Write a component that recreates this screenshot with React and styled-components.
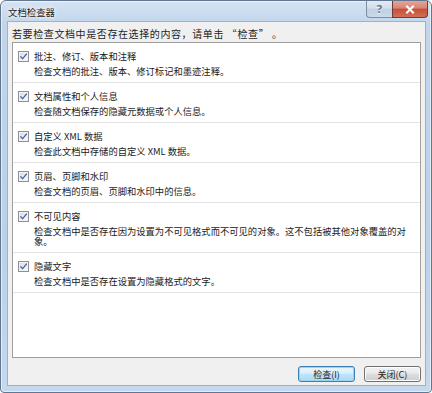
import React from 'react';
import styled, { createGlobalStyle } from 'styled-components';

const GlobalStyle = createGlobalStyle`
  html, body {
    margin: 0;
    padding: 0;
    background: #ffffff;
  }
  body {
    width: 432px;
    height: 393px;
    overflow: hidden;
    font-family: "Noto Sans CJK SC", "Liberation Sans", sans-serif;
  }
`;

const checks = [
  { title: '批注、修订、版本和注释', desc: '检查文档的批注、版本、修订标记和墨迹注释。' },
  { title: '文档属性和个人信息', desc: '检查随文档保存的隐藏元数据或个人信息。' },
  { title: '自定义 XML 数据', desc: '检查此文档中存储的自定义 XML 数据。' },
  { title: '页眉、页脚和水印', desc: '检查文档的页眉、页脚和水印中的信息。' },
  { title: '不可见内容', desc: '检查文档中是否存在因为设置为不可见格式而不可见的对象。这不包括被其他对象覆盖的对象。' },
  { title: '隐藏文字', desc: '检查文档中是否存在设置为隐藏格式的文字。' },
];

const CheckMark = () => (
  <svg width="9" height="9" viewBox="0 0 9 9">
    <path d="M1.7 4.7 L3.7 6.7 L7.5 2" fill="none" stroke="#4b6ca8" strokeWidth="1.3" strokeLinecap="round" strokeLinejoin="round" />
  </svg>
);

const CloseGlyph = () => (
  <svg width="10" height="9" viewBox="0 0 10 9">
    <path d="M2 1.5 L8 7.5 M8 1.5 L2 7.5" stroke="#ffffff" strokeWidth="2" strokeLinecap="square" />
  </svg>
);

const App = () => {
  return (
    <>
      <GlobalStyle />
      <Window>
        <TitleBar>
          <Title>文档检查器</Title>
          <CaptionButtons>
            <HelpButton>?</HelpButton>
            <CloseButton><CloseGlyph /></CloseButton>
          </CaptionButtons>
        </TitleBar>

        <Client>
          <Instruction>若要检查文档中是否存在选择的内容，请单击 “检查” 。</Instruction>

          <ListBox>
            {checks.map((item) => (
              <Row key={item.title}>
                <CheckBox><CheckMark /></CheckBox>
                <RowText>
                  <RowTitle>{item.title}</RowTitle>
                  <RowDesc>{item.desc}</RowDesc>
                </RowText>
              </Row>
            ))}
          </ListBox>

          <Footer>
            <Button $default>检查(I)</Button>
            <Button>关闭(C)</Button>
          </Footer>
        </Client>
      </Window>
    </>
  );
};

export default App;

const Window = styled.div`
  box-sizing: border-box;
  width: 432px;
  height: 393px;
  display: flex;
  flex-direction: column;
  border: 1px solid #62768f;
  border-radius: 6px 6px 4px 4px;
  background: linear-gradient(180deg, #d6e4f3 0px, #c1d6ed 22px, #bad1ea 60%, #c4d8ee 100%);
  box-shadow: inset 0 0 0 1px rgba(255, 255, 255, 0.55);
  padding: 0 5px 6px 6px;
`;

const TitleBar = styled.div`
  height: 20px;
  display: flex;
  align-items: center;
  margin-right: -2px;
  padding-left: 1px;
`;

const Title = styled.span`
  font-size: 9.4px;
  color: #1b1b1b;
  text-shadow: 0 0 5px #ffffff, 0 0 3px #ffffff;
  line-height: 14px;
  margin-top: 1px;
`;

const CaptionButtons = styled.div`
  display: flex;
  margin-left: auto;
  align-self: flex-start;
  height: 17px;
`;

const HelpButton = styled.div`
  box-sizing: border-box;
  width: 26px;
  height: 17px;
  display: flex;
  align-items: center;
  justify-content: center;
  border: 1px solid #7d8ea6;
  border-top: none;
  border-right: none;
  border-radius: 0 0 0 4px;
  background: linear-gradient(180deg, #e3ebf4 0%, #d3dfec 45%, #bfcfe1 50%, #cbd9e8 100%);
  font-family: "DejaVu Sans", sans-serif;
  font-size: 11px;
  font-weight: bold;
  color: #6d7c90;
  text-shadow: 0 1px 0 #ffffff;
`;

const CloseButton = styled.div`
  box-sizing: border-box;
  width: 36px;
  height: 17px;
  display: flex;
  align-items: center;
  justify-content: center;
  border: 1px solid #6f3b33;
  border-top: none;
  border-radius: 0 0 4px 0;
  background: linear-gradient(180deg, #e4a597 0%, #d88573 45%, #c64f38 50%, #d36f55 100%);
`;

const Client = styled.div`
  flex: 1;
  display: flex;
  flex-direction: column;
  background: #f0f0f0;
  border: 1px solid #9db2c9;
  padding: 0 4px;
  min-height: 0;
`;

const Instruction = styled.div`
  font-size: 10px;
  line-height: 14px;
  letter-spacing: 0.6px;
  color: #1e1e1e;
  margin: 5px 0 1px;
  white-space: nowrap;
`;

const ListBox = styled.div`
  flex: 1;
  background: #ffffff;
  border: 1px solid #a0a0a0;
  display: flex;
  flex-direction: column;
`;

const Row = styled.div`
  display: flex;
  align-items: flex-start;
  gap: 5px;
  padding: 6px 12px 6px 5px;
  border-bottom: 1px solid #e3e3e3;
`;

const CheckBox = styled.div`
  box-sizing: border-box;
  flex: none;
  width: 11px;
  height: 11px;
  margin-top: 2px;
  border: 1px solid #8e8f8f;
  background: linear-gradient(135deg, #d6d8dc 0%, #eef0f3 60%, #f9f9fa 100%);
  box-shadow: inset 0 0 0 1px #f4f4f4;
  display: flex;
  align-items: center;
  justify-content: center;
`;

const RowText = styled.div`
  display: flex;
  flex-direction: column;
  min-width: 0;
`;

const RowTitle = styled.div`
  font-size: 9.3px;
  line-height: 15px;
  color: #1a1a1a;
`;

const RowDesc = styled.div`
  font-size: 9.3px;
  line-height: 10px;
  margin-top: 2px;
  color: #1a1a1a;
`;

const Footer = styled.div`
  display: flex;
  justify-content: flex-end;
  gap: 9px;
  padding: 8px 0 3px;
`;

const Button = styled.div`
  box-sizing: border-box;
  width: 57px;
  height: 16px;
  display: flex;
  align-items: center;
  justify-content: center;
  font-size: 9px;
  color: #1e1e1e;
  border-radius: 3px;
  border: 1px solid ${(p) => (p.$default ? '#3c7fb1' : '#707070')};
  background: ${(p) =>
    p.$default
      ? 'linear-gradient(180deg, #eaf6fd 0%, #d9f0fc 45%, #bee6fd 50%, #a7d9f5 100%)'
      : 'linear-gradient(180deg, #f2f2f2 0%, #ebebeb 45%, #dddddd 50%, #cfcfcf 100%)'};
  box-shadow: inset 0 0 0 1px ${(p) => (p.$default ? '#9cd3f5' : '#fcfcfc')};
`;
